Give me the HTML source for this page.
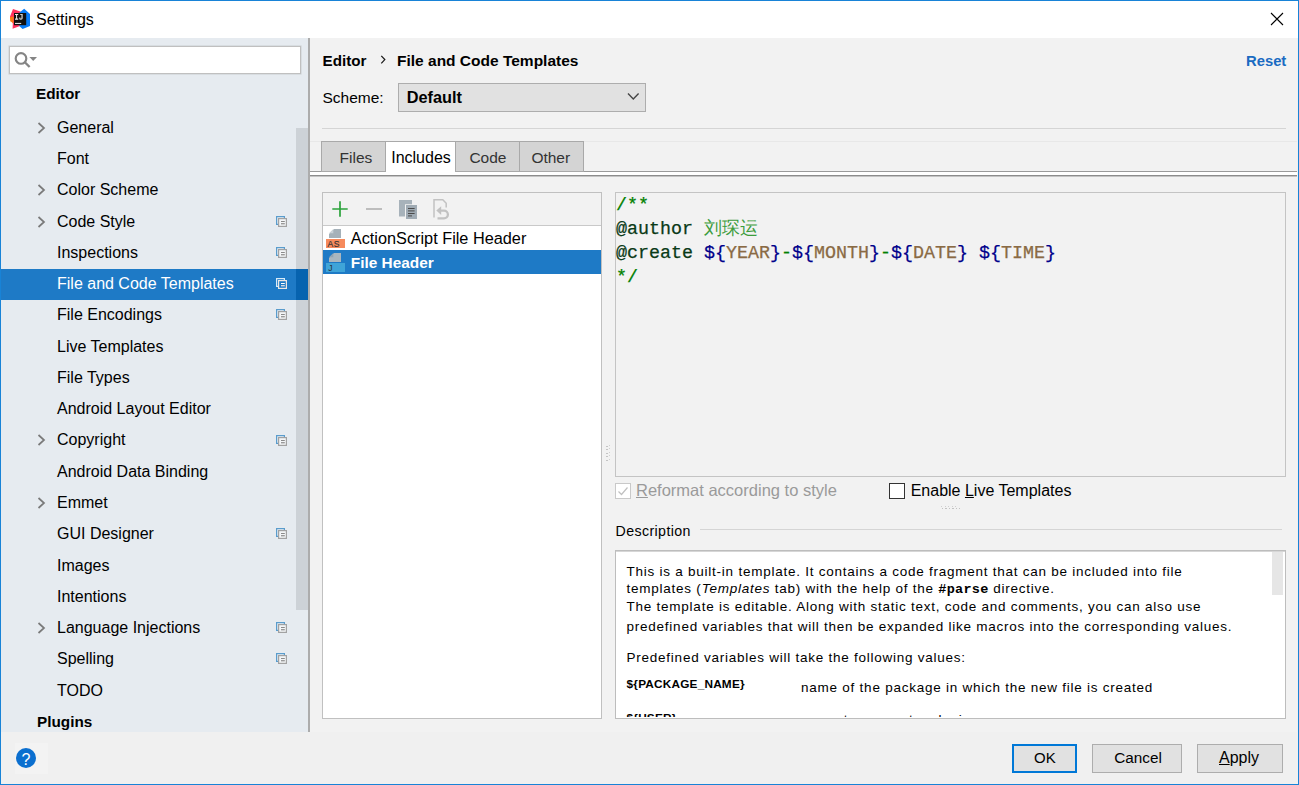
<!DOCTYPE html>
<html><head><meta charset="utf-8"><style>
html,body{margin:0;padding:0;width:1299px;height:785px;overflow:hidden;background:#f0f0f0;}
body{position:relative;font-family:"Liberation Sans", sans-serif;}
.b{position:absolute;}
.t{position:absolute;white-space:nowrap;font-family:"Liberation Sans", sans-serif;}
.mono{font-family:'Liberation Mono',monospace;letter-spacing:0.3px;}
u{text-decoration:underline;text-underline-offset:1px;}
</style></head><body>
<div class="b" style="left:0px;top:0px;width:1299px;height:785px;background:#1883d7;"></div>
<div class="b" style="left:1px;top:1px;width:1297px;height:783px;background:#f0f0f0;"></div>
<div class="b" style="left:1px;top:1px;width:1297px;height:37px;background:#fff;"></div>
<svg class="b" style="left:8px;top:6px" width="26" height="26" viewBox="8 6 26 26">
<polygon points="13,9 21,11.8 20,26 12.6,28.8 12.8,23.5 10,17 10,16.5" fill="#fe315d"/>
<polygon points="10,17 13.5,16.5 13.5,23.2 10.2,21.3" fill="#f97a12"/>
<polygon points="24.2,8.8 30,14 30,26 22.6,28.9 19.5,26.2 19.5,12.5" fill="#087cfa"/>
<rect x="14" y="13" width="12.2" height="12.2" fill="#111"/>
<path d="M15 14H18.2V15.1H17.1V18.6H18.2V19.7H15V18.6H16.1V15.1H15Z" fill="#eee"/>
<path d="M20.2 14H22.7V18.3Q22.7 19.7 21.1 19.7H20.4Q19.2 19.7 19.2 18.4V17.6H20.4V18.3Q20.4 18.6 20.8 18.6Q21.4 18.6 21.4 18.1V15.1H20.2Z" fill="#d0d0d0"/>
<rect x="15" y="22.9" width="6.2" height="1" fill="#f4f4f4"/>
</svg>
<div class="t " style="left:36px;top:10.00px;font-size:16px;line-height:20px;color:#000;">Settings</div>
<svg class="b" style="left:1270px;top:12px" width="14" height="14" viewBox="0 0 14 14"><path d="M1 1L13 13M13 1L1 13" stroke="#000" stroke-width="1.1"/></svg>
<div class="b" style="left:1px;top:38px;width:307px;height:694px;background:#e6ebf0;"></div>
<div class="b" style="left:308px;top:38px;width:2px;height:694px;background:#acacac;"></div>
<div class="b" style="left:296px;top:128px;width:12px;height:482px;background:#cdd2d7;"></div>
<div class="b" style="left:9px;top:46px;width:292px;height:28px;background:#fff;box-sizing:border-box;border:1px solid #c0c0c0;box-shadow:0 0 0 0.6px #d0d4d8;"></div>
<svg class="b" style="left:14px;top:52px" width="24" height="18" viewBox="0 0 24 18">
<circle cx="7" cy="6.4" r="5.3" fill="none" stroke="#858585" stroke-width="2.15"/>
<path d="M10.6 10L15.6 15" stroke="#858585" stroke-width="2.4"/>
<path d="M15.4 4.9h7.6l-3.8 4.1z" fill="#858585"/>
</svg>
<div class="t " style="left:36px;top:84.00px;font-size:15.3px;line-height:20px;color:#000;font-weight:bold;">Editor</div>
<svg class="b" style="left:37px;top:122px" width="10" height="12" viewBox="0 0 10 12"><path d="M1.5 1L7 6L1.5 11" fill="none" stroke="#7a7a7a" stroke-width="1.7"/></svg>
<div class="t " style="left:57px;top:118.00px;font-size:16px;line-height:20px;color:#000;">General</div>
<div class="t " style="left:57px;top:149.00px;font-size:16px;line-height:20px;color:#000;">Font</div>
<svg class="b" style="left:37px;top:184px" width="10" height="12" viewBox="0 0 10 12"><path d="M1.5 1L7 6L1.5 11" fill="none" stroke="#7a7a7a" stroke-width="1.7"/></svg>
<div class="t " style="left:57px;top:180.00px;font-size:16px;line-height:20px;color:#000;">Color Scheme</div>
<svg class="b" style="left:37px;top:216px" width="10" height="12" viewBox="0 0 10 12"><path d="M1.5 1L7 6L1.5 11" fill="none" stroke="#7a7a7a" stroke-width="1.7"/></svg>
<div class="t " style="left:57px;top:212.00px;font-size:16px;line-height:20px;color:#000;">Code Style</div>
<svg class="b" style="left:274px;top:214px" width="16" height="16" viewBox="274 214 16 16">
<rect x="276.6" y="216.6" width="7.8" height="7.8" fill="none" stroke="#5a9ccc" stroke-width="1.2"/>
<rect x="278.6" y="218.6" width="7.8" height="7.8" fill="#f3f5f7" stroke="#a2a2a2" stroke-width="1.2"/>
<rect x="281" y="221" width="3.8" height="1" fill="#8a8a8a"/>
<rect x="281" y="223" width="3.8" height="1.4" fill="#9a9a9a"/>
</svg>
<div class="t " style="left:57px;top:243.00px;font-size:16px;line-height:20px;color:#000;">Inspections</div>
<svg class="b" style="left:274px;top:245px" width="16" height="16" viewBox="274 245 16 16">
<rect x="276.6" y="247.6" width="7.8" height="7.8" fill="none" stroke="#5a9ccc" stroke-width="1.2"/>
<rect x="278.6" y="249.6" width="7.8" height="7.8" fill="#f3f5f7" stroke="#a2a2a2" stroke-width="1.2"/>
<rect x="281" y="252" width="3.8" height="1" fill="#8a8a8a"/>
<rect x="281" y="254" width="3.8" height="1.4" fill="#9a9a9a"/>
</svg>
<div class="b" style="left:1px;top:269px;width:295px;height:31px;background:#1e7ac6;"></div>
<div class="b" style="left:296px;top:269px;width:12px;height:31px;background:#0763af;"></div>
<div class="t " style="left:57px;top:274.00px;font-size:16px;line-height:20px;color:#fff;">File and Code Templates</div>
<svg class="b" style="left:274px;top:276px" width="16" height="16" viewBox="274 276 16 16">
<rect x="276.6" y="278.6" width="7.8" height="7.8" fill="none" stroke="#d6eaf8" stroke-width="1.2"/>
<rect x="278.6" y="280.6" width="7.8" height="7.8" fill="#1e7ac6" stroke="#ece6e2" stroke-width="1.2"/>
<rect x="281" y="283" width="3.8" height="1" fill="#ffffff"/>
<rect x="281" y="285" width="3.8" height="1.4" fill="#d0d8e0"/>
</svg>
<div class="t " style="left:57px;top:305.00px;font-size:16px;line-height:20px;color:#000;">File Encodings</div>
<svg class="b" style="left:274px;top:307px" width="16" height="16" viewBox="274 307 16 16">
<rect x="276.6" y="309.6" width="7.8" height="7.8" fill="none" stroke="#5a9ccc" stroke-width="1.2"/>
<rect x="278.6" y="311.6" width="7.8" height="7.8" fill="#f3f5f7" stroke="#a2a2a2" stroke-width="1.2"/>
<rect x="281" y="314" width="3.8" height="1" fill="#8a8a8a"/>
<rect x="281" y="316" width="3.8" height="1.4" fill="#9a9a9a"/>
</svg>
<div class="t " style="left:57px;top:337.00px;font-size:16px;line-height:20px;color:#000;">Live Templates</div>
<div class="t " style="left:57px;top:368.00px;font-size:16px;line-height:20px;color:#000;">File Types</div>
<div class="t " style="left:57px;top:399.00px;font-size:16px;line-height:20px;color:#000;">Android Layout Editor</div>
<svg class="b" style="left:37px;top:434px" width="10" height="12" viewBox="0 0 10 12"><path d="M1.5 1L7 6L1.5 11" fill="none" stroke="#7a7a7a" stroke-width="1.7"/></svg>
<div class="t " style="left:57px;top:430.00px;font-size:16px;line-height:20px;color:#000;">Copyright</div>
<svg class="b" style="left:274px;top:433px" width="16" height="16" viewBox="274 433 16 16">
<rect x="276.6" y="435.6" width="7.8" height="7.8" fill="none" stroke="#5a9ccc" stroke-width="1.2"/>
<rect x="278.6" y="437.6" width="7.8" height="7.8" fill="#f3f5f7" stroke="#a2a2a2" stroke-width="1.2"/>
<rect x="281" y="440" width="3.8" height="1" fill="#8a8a8a"/>
<rect x="281" y="442" width="3.8" height="1.4" fill="#9a9a9a"/>
</svg>
<div class="t " style="left:57px;top:462.00px;font-size:16px;line-height:20px;color:#000;">Android Data Binding</div>
<svg class="b" style="left:37px;top:497px" width="10" height="12" viewBox="0 0 10 12"><path d="M1.5 1L7 6L1.5 11" fill="none" stroke="#7a7a7a" stroke-width="1.7"/></svg>
<div class="t " style="left:57px;top:493.00px;font-size:16px;line-height:20px;color:#000;">Emmet</div>
<div class="t " style="left:57px;top:524.00px;font-size:16px;line-height:20px;color:#000;">GUI Designer</div>
<svg class="b" style="left:274px;top:526px" width="16" height="16" viewBox="274 526 16 16">
<rect x="276.6" y="528.6" width="7.8" height="7.8" fill="none" stroke="#5a9ccc" stroke-width="1.2"/>
<rect x="278.6" y="530.6" width="7.8" height="7.8" fill="#f3f5f7" stroke="#a2a2a2" stroke-width="1.2"/>
<rect x="281" y="533" width="3.8" height="1" fill="#8a8a8a"/>
<rect x="281" y="535" width="3.8" height="1.4" fill="#9a9a9a"/>
</svg>
<div class="t " style="left:57px;top:556.00px;font-size:16px;line-height:20px;color:#000;">Images</div>
<div class="t " style="left:57px;top:587.00px;font-size:16px;line-height:20px;color:#000;">Intentions</div>
<svg class="b" style="left:37px;top:622px" width="10" height="12" viewBox="0 0 10 12"><path d="M1.5 1L7 6L1.5 11" fill="none" stroke="#7a7a7a" stroke-width="1.7"/></svg>
<div class="t " style="left:57px;top:618.00px;font-size:16px;line-height:20px;color:#000;">Language Injections</div>
<svg class="b" style="left:274px;top:620px" width="16" height="16" viewBox="274 620 16 16">
<rect x="276.6" y="622.6" width="7.8" height="7.8" fill="none" stroke="#5a9ccc" stroke-width="1.2"/>
<rect x="278.6" y="624.6" width="7.8" height="7.8" fill="#f3f5f7" stroke="#a2a2a2" stroke-width="1.2"/>
<rect x="281" y="627" width="3.8" height="1" fill="#8a8a8a"/>
<rect x="281" y="629" width="3.8" height="1.4" fill="#9a9a9a"/>
</svg>
<div class="t " style="left:57px;top:649.00px;font-size:16px;line-height:20px;color:#000;">Spelling</div>
<svg class="b" style="left:274px;top:651px" width="16" height="16" viewBox="274 651 16 16">
<rect x="276.6" y="653.6" width="7.8" height="7.8" fill="none" stroke="#5a9ccc" stroke-width="1.2"/>
<rect x="278.6" y="655.6" width="7.8" height="7.8" fill="#f3f5f7" stroke="#a2a2a2" stroke-width="1.2"/>
<rect x="281" y="658" width="3.8" height="1" fill="#8a8a8a"/>
<rect x="281" y="660" width="3.8" height="1.4" fill="#9a9a9a"/>
</svg>
<div class="t " style="left:57px;top:681.00px;font-size:16px;line-height:20px;color:#000;">TODO</div>
<div class="t " style="left:37px;top:712.00px;font-size:15.3px;line-height:20px;color:#000;font-weight:bold;">Plugins</div>
<div class="b" style="left:15px;top:743px;width:33px;height:31px;background:#f3f3f3;"></div>
<div class="b" style="left:16px;top:748px;width:20px;height:20px;border-radius:50%;background:#0b6fcf"></div>
<div class="t " style="left:21.5px;top:750.00px;font-size:16px;line-height:20px;color:#fff;">?</div>
<div class="b" style="left:310px;top:38px;width:987px;height:694px;background:#f2f2f2;"></div>
<div class="t " style="left:322.5px;top:51.00px;font-size:15.2px;line-height:20px;color:#000;font-weight:bold;">Editor</div>
<svg class="b" style="left:378px;top:52px" width="10" height="14" viewBox="378 52 10 14"><path d="M381.3 55.8L384.8 59.6L381.3 63.4" fill="none" stroke="#1a1a1a" stroke-width="1.25"/></svg>
<div class="t " style="left:397px;top:51.00px;font-size:15.5px;line-height:20px;color:#000;font-weight:bold;">File and Code Templates</div>
<div class="t " style="left:1246px;top:51.00px;font-size:14.8px;line-height:20px;color:#1a6bc2;font-weight:bold;">Reset</div>
<div class="t " style="left:322.5px;top:88.00px;font-size:15.5px;line-height:20px;color:#000;">Scheme:</div>
<div class="b" style="left:398px;top:83px;width:248px;height:29px;background:#e1e1e1;box-sizing:border-box;border:1px solid #adadad;"></div>
<div class="t " style="left:406.7px;top:87.00px;font-size:16.3px;line-height:20px;color:#000;font-weight:bold;">Default</div>
<svg class="b" style="left:626px;top:91px" width="14" height="10" viewBox="0 0 14 10"><path d="M2 2.5L7.3 8L12.6 2.5" fill="none" stroke="#444" stroke-width="1.35"/></svg>
<div class="b" style="left:322px;top:128px;width:964px;height:1px;background:#d5d5d5;"></div>
<div class="b" style="left:310px;top:141px;width:987px;height:1px;background:#e8e8e8;"></div>
<div class="b" style="left:310px;top:171px;width:987px;height:1px;background:#9a9a9a;"></div>
<div class="b" style="left:310px;top:172px;width:987px;height:3px;background:#fff;"></div>
<div class="b" style="left:310px;top:175px;width:987px;height:1px;background:#8c8c8c;"></div>
<div class="b" style="left:310px;top:176px;width:987px;height:1px;background:#c4c4c4;"></div>
<div class="b" style="left:321px;top:141px;width:65px;height:31px;background:#d4d4d4;box-sizing:border-box;border:1px solid #a9a9a9;"></div>
<div class="b" style="left:455px;top:141px;width:65px;height:31px;background:#d4d4d4;box-sizing:border-box;border:1px solid #a9a9a9;"></div>
<div class="b" style="left:519px;top:141px;width:65px;height:31px;background:#d4d4d4;box-sizing:border-box;border:1px solid #a9a9a9;"></div>
<div class="t " style="left:339.6px;top:148.00px;font-size:15.5px;line-height:20px;color:#333;">Files</div>
<div class="b" style="left:385px;top:141px;width:71px;height:31px;background:#fff;box-sizing:border-box;border:1px solid #a9a9a9;border-bottom:none;"></div>
<div class="t " style="left:391.2px;top:148.00px;font-size:16px;line-height:20px;color:#000;">Includes</div>
<div class="t " style="left:469.4px;top:148.00px;font-size:15.5px;line-height:20px;color:#333;">Code</div>
<div class="t " style="left:531.4px;top:148.00px;font-size:15.5px;line-height:20px;color:#333;">Other</div>
<div class="b" style="left:322px;top:192px;width:280px;height:527px;background:#fff;box-sizing:border-box;border:1px solid #c0c0c0;"></div>
<div class="b" style="left:323px;top:193px;width:278px;height:32px;background:#f2f2f2;"></div>
<div class="b" style="left:323px;top:225px;width:278px;height:1px;background:#c9c9c9;"></div>
<svg class="b" style="left:323px;top:193px" width="278" height="32" viewBox="323 193 278 32">
<path d="M340 201.3V216.7M332.3 209H347.7" stroke="#2ba33b" stroke-width="1.7"/>
<rect x="366" y="208" width="16" height="2" fill="#bdbdbd"/>
<path d="M399 200H412V204.2H405V216.5H399Z" fill="#a7b2ba"/>
<rect x="406" y="205" width="11" height="14" fill="#a0abb4"/>
<rect x="408" y="208" width="6.6" height="1" fill="#4a4a4a"/><rect x="408" y="210.4" width="6.6" height="1" fill="#4a4a4a"/>
<rect x="408" y="213" width="6.6" height="1" fill="#4a4a4a"/><rect x="408" y="215.4" width="4" height="1" fill="#4a4a4a"/>
<path d="M434 217.5V199.8H442.8L446.2 203.2V207.5" fill="none" stroke="#c2c2c2" stroke-width="1.5"/>
<path d="M440 210.6H444A3.9 3.9 0 0 1 444 218.4H437.5" fill="none" stroke="#c2c2c2" stroke-width="2.3"/>
<path d="M436.3 210.6L441.2 206.2V215Z" fill="#c2c2c2"/>
</svg>
<div class="b" style="left:323px;top:250px;width:278px;height:24px;background:#1e7ac6;"></div>
<svg class="b" style="left:326px;top:228px" width="20" height="21" viewBox="326 228 20 21">
<polygon points="334,229 341,229 341,238 329,238 329,234" fill="#a5b1b9"/>
<polygon points="329,233.3 333.3,229 333.3,233.3" fill="#c9d1d7"/>
<rect x="326" y="239" width="19" height="9" fill="#f68a5c"/>
<text x="327.6" y="247.2" font-family="Liberation Sans" font-size="8.6" fill="#333" letter-spacing="0.4" stroke="#333" stroke-width="0.15">AS</text></svg>
<div class="t " style="left:350.8px;top:228.00px;font-size:16.3px;line-height:20px;color:#000;">ActionScript File Header</div>
<svg class="b" style="left:326px;top:252px" width="20" height="21" viewBox="326 252 20 21">
<polygon points="334,253 341,253 341,262 329,262 329,258" fill="#a9b6bf"/>
<polygon points="329,257.3 333.3,253 333.3,257.3" fill="#8fa3b3"/>
<rect x="326" y="263" width="19" height="9" fill="#3fa4d8"/>
<text x="328.3" y="271.2" font-family="Liberation Sans" font-size="8.6" fill="#2a3440">J</text></svg>
<div class="t " style="left:350.8px;top:253.00px;font-size:15.4px;line-height:20px;color:#fff;font-weight:bold;">File Header</div>
<div class="b" style="left:615px;top:192px;width:671px;height:285px;background:#f2f2f2;box-sizing:border-box;border:1px solid #c4c4c4;"></div>
<div class="t" style="left:616px;top:194.00px;font-family:'Liberation Mono', monospace;font-size:18.33px;line-height:24px;-webkit-text-stroke:0.25px"><span style="color:#008000">/**</span></div>
<div class="t" style="left:616px;top:218.00px;font-family:'Liberation Mono', monospace;font-size:18.33px;line-height:24px;-webkit-text-stroke:0.25px"><span style="color:#0a3a17">@author</span> <span style="color:#3c9c3c;-webkit-text-stroke:0;font-weight:300">刘琛运</span></div>
<div class="t" style="left:616px;top:242.00px;font-family:'Liberation Mono', monospace;font-size:18.33px;line-height:24px;-webkit-text-stroke:0.25px"><span style="color:#0a3a17">@create</span> <span style="color:#00008b">${</span><span style="color:#8a6a44">YEAR</span><span style="color:#00008b">}</span><span style="color:#008000">-</span><span style="color:#00008b">${</span><span style="color:#8a6a44">MONTH</span><span style="color:#00008b">}</span><span style="color:#008000">-</span><span style="color:#00008b">${</span><span style="color:#8a6a44">DATE</span><span style="color:#00008b">}</span> <span style="color:#00008b">${</span><span style="color:#8a6a44">TIME</span><span style="color:#00008b">}</span></div>
<div class="t" style="left:616px;top:266.00px;font-family:'Liberation Mono', monospace;font-size:18.33px;line-height:24px;-webkit-text-stroke:0.25px"><span style="color:#008000">*/</span></div>
<div class="b" style="left:606px;top:446px;width:2px;height:17px;background:repeating-linear-gradient(#c4c4c4 0 1px,transparent 1px 3.4px)"></div>
<div class="b" style="left:609px;top:445px;width:1px;height:17px;background:repeating-linear-gradient(#d0d0d0 0 1px,transparent 1px 3.4px)"></div>
<div class="b" style="left:615px;top:483px;width:16px;height:16px;background:#fff;box-sizing:border-box;border:1px solid #c9c9c9;"></div>
<svg class="b" style="left:617px;top:485px" width="12" height="12" viewBox="0 0 12 12"><path d="M1.5 6.5L4.5 9.5L10.5 2.5" fill="none" stroke="#c0c0c0" stroke-width="1.2"/></svg>
<div class="t " style="left:636px;top:480.00px;font-size:16.5px;line-height:20px;color:#9a9a9a;"><u>R</u>eformat according to style</div>
<div class="b" style="left:889px;top:483px;width:16px;height:16px;background:#fff;box-sizing:border-box;border:1px solid #333;"></div>
<div class="t " style="left:910.7px;top:481.00px;font-size:16px;line-height:20px;color:#000;">Enable <u>L</u>ive Templates</div>
<div class="b" style="left:941px;top:506px;width:18px;height:1px;background:repeating-linear-gradient(90deg,#cfcfcf 0 1px,transparent 1px 3.5px)"></div>
<div class="b" style="left:942px;top:508px;width:18px;height:1px;background:repeating-linear-gradient(90deg,#c2c2c2 0 1.5px,transparent 1.5px 3.5px)"></div>
<div class="t " style="left:615.5px;top:521.00px;font-size:14.2px;line-height:20px;color:#000;letter-spacing:0.4px;">Description</div>
<div class="b" style="left:700px;top:529px;width:582px;height:1px;background:#d5d5d5;"></div>
<div class="b" style="left:615px;top:550px;width:671px;height:169px;box-sizing:border-box;border:1px solid #bdbdbd;background:#fff"></div>
<div class="b" style="left:616px;top:551px;width:669px;height:166px;overflow:hidden">
<div class="t " style="left:10.600000000000023px;top:11.00px;font-size:13.5px;line-height:20px;color:#000;letter-spacing:0.75px;">This is a built-in template. It contains a code fragment that can be included into file</div>
<div class="t " style="left:10.600000000000023px;top:28.00px;font-size:13.5px;line-height:20px;color:#000;letter-spacing:0.75px;">templates (<i>Templates</i> tab) with the help of the <b class=mono>#parse</b> directive.</div>
<div class="t " style="left:10.600000000000023px;top:46.00px;font-size:13.5px;line-height:20px;color:#000;letter-spacing:0.75px;">The template is editable. Along with static text, code and comments, you can also use</div>
<div class="t " style="left:10.600000000000023px;top:66.00px;font-size:13.5px;line-height:20px;color:#000;letter-spacing:0.75px;">predefined variables that will then be expanded like macros into the corresponding values.</div>
<div class="t " style="left:10.600000000000023px;top:97.00px;font-size:13.5px;line-height:20px;color:#000;letter-spacing:0.75px;">Predefined variables will take the following values:</div>
<div class="t " style="left:10.600000000000023px;top:123.00px;font-size:11.8px;line-height:20px;color:#000;letter-spacing:0.2px;"><b>${PACKAGE_NAME}</b></div>
<div class="t " style="left:185.10000000000002px;top:127.00px;font-size:13.5px;line-height:20px;color:#000;letter-spacing:0.75px;">name of the package in which the new file is created</div>
<div class="t " style="left:10.600000000000023px;top:157.00px;font-size:11.8px;line-height:20px;color:#000;letter-spacing:0.2px;"><b>${USER}</b></div>
<div class="t " style="left:185.10000000000002px;top:159.00px;font-size:13.5px;line-height:20px;color:#000;letter-spacing:0.75px;">current user system login name</div>
</div>
<div class="b" style="left:1272px;top:552px;width:11px;height:43px;background:#e6e6e6;"></div>
<div class="b" style="left:616px;top:551px;width:669px;height:1px;background:#d6d6d6;"></div>
<div class="b" style="left:1012px;top:744px;width:65px;height:29px;background:#e1e1e1;box-sizing:border-box;border:2px solid #0078d7;"></div>
<div class="t " style="left:1034px;top:748.00px;font-size:15px;line-height:20px;color:#000;">OK</div>
<div class="b" style="left:1092px;top:744px;width:90px;height:29px;background:#e1e1e1;box-sizing:border-box;border:1px solid #adadad;"></div>
<div class="t " style="left:1114.3px;top:748.00px;font-size:15.3px;line-height:20px;color:#000;">Cancel</div>
<div class="b" style="left:1197px;top:744px;width:86px;height:29px;background:#e1e1e1;box-sizing:border-box;border:1px solid #adadad;"></div>
<div class="t " style="left:1219px;top:748.00px;font-size:16px;line-height:20px;color:#000;"><u>A</u>pply</div>
</body></html>
